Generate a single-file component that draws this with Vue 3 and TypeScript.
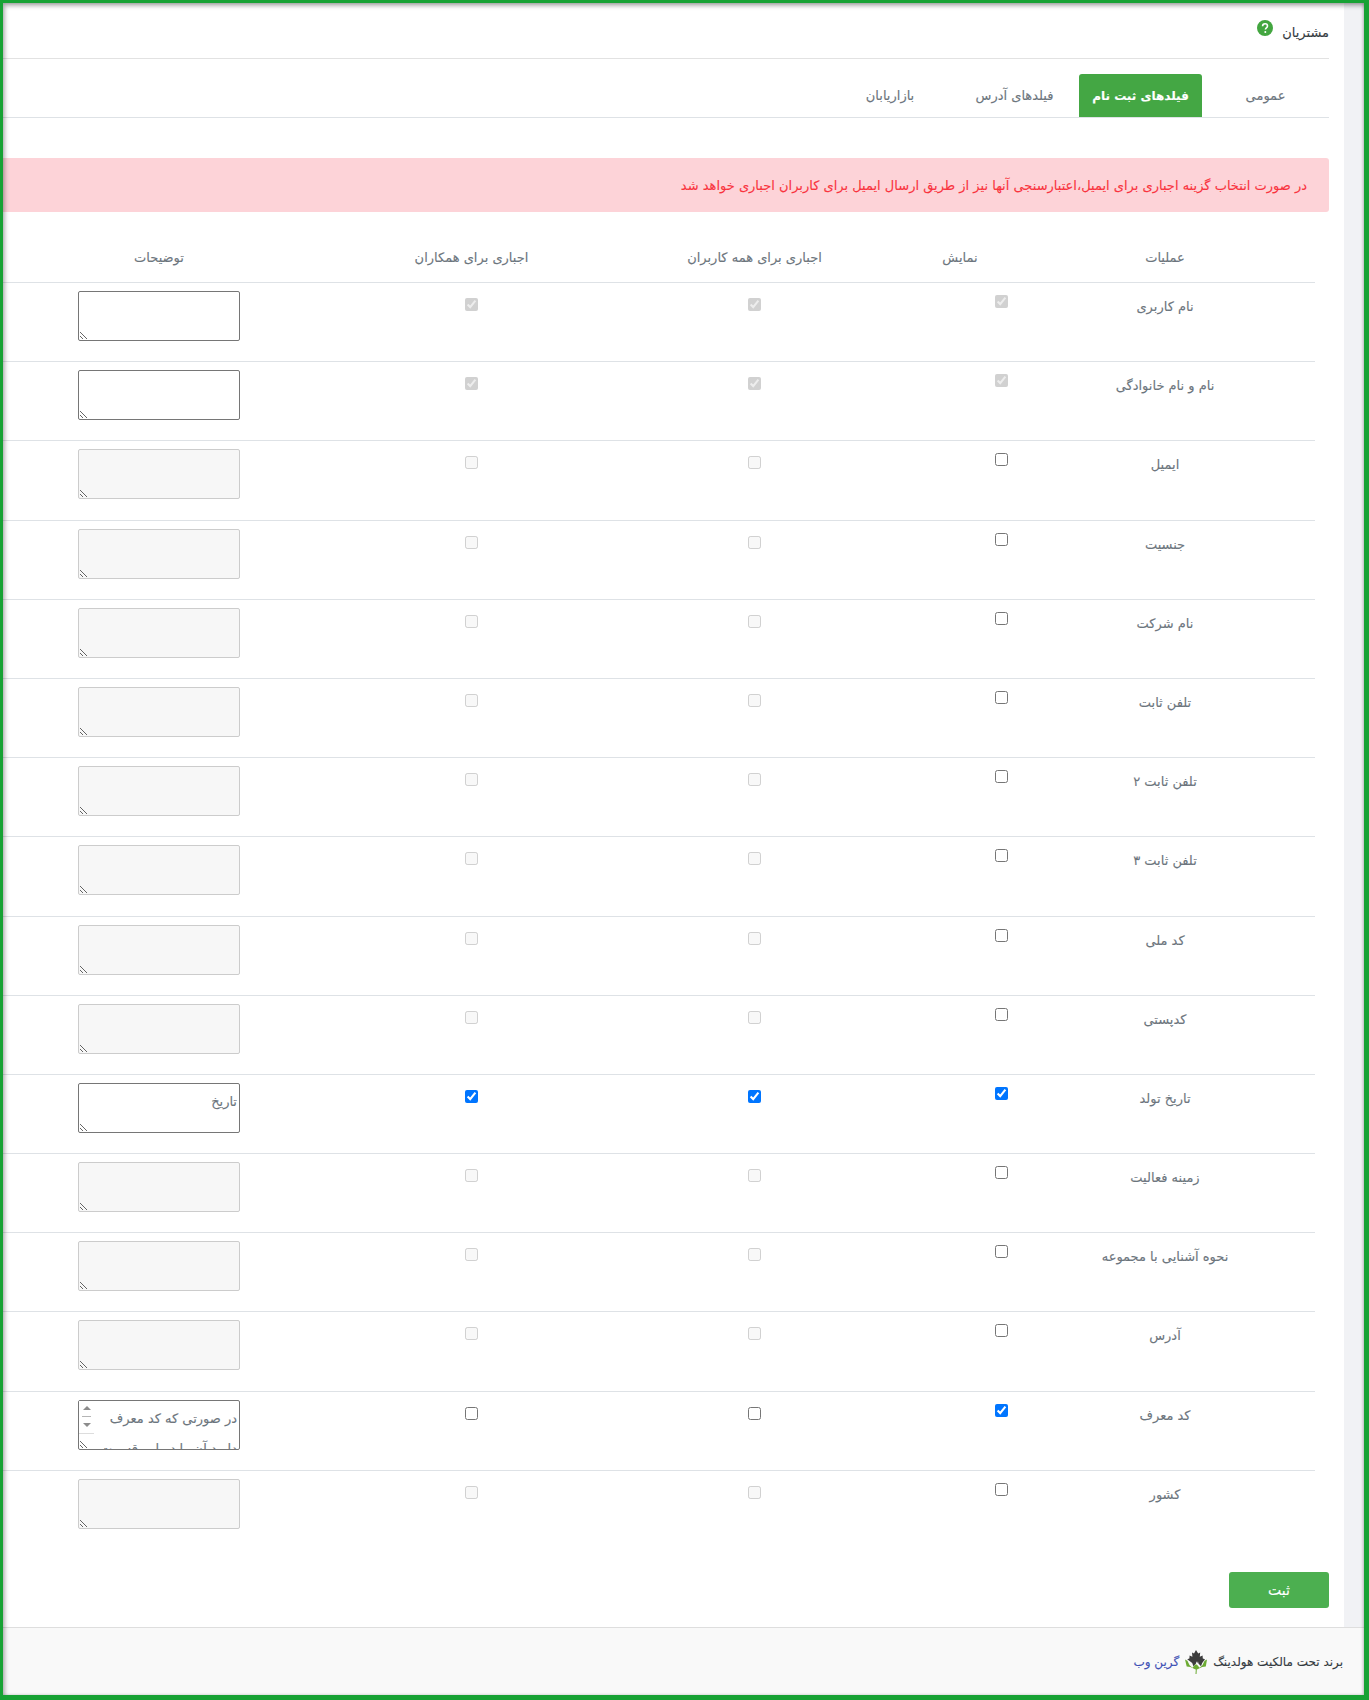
<script setup lang="ts">
interface Row {
  label: string
  show: 'locked' | 'on' | 'off'
  required: 'locked' | 'on' | 'off' | 'disabled'
  note?: string
  noteOff?: boolean
  scroll?: boolean
}

const rows: Row[] = [
  { label: 'نام کاربری', show: 'locked', required: 'locked' },
  { label: 'نام و نام خانوادگی', show: 'locked', required: 'locked' },
  { label: 'ایمیل', show: 'off', required: 'disabled', noteOff: true },
  { label: 'جنسیت', show: 'off', required: 'disabled', noteOff: true },
  { label: 'نام شرکت', show: 'off', required: 'disabled', noteOff: true },
  { label: 'تلفن ثابت', show: 'off', required: 'disabled', noteOff: true },
  { label: 'تلفن ثابت ۲', show: 'off', required: 'disabled', noteOff: true },
  { label: 'تلفن ثابت ۳', show: 'off', required: 'disabled', noteOff: true },
  { label: 'کد ملی', show: 'off', required: 'disabled', noteOff: true },
  { label: 'کدپستی', show: 'off', required: 'disabled', noteOff: true },
  { label: 'تاریخ تولد', show: 'on', required: 'on', note: 'تاریخ' },
  { label: 'زمینه فعالیت', show: 'off', required: 'disabled', noteOff: true },
  { label: 'نحوه آشنایی با مجموعه', show: 'off', required: 'disabled', noteOff: true },
  { label: 'آدرس', show: 'off', required: 'disabled', noteOff: true },
  { label: 'کد معرف', show: 'on', required: 'off', note: 'در صورتی که کد معرف دارید آن را در این قسمت وارد کنید', scroll: true },
  { label: 'کشور', show: 'off', required: 'disabled', noteOff: true },
]

const tabs = [
  { name: 'عمومی', width: 127, active: false },
  { name: 'فیلدهای ثبت نام', width: 123, active: true },
  { name: 'فیلدهای آدرس', width: 129, active: false },
  { name: 'بازاریابان', width: 120, active: false },
]
</script>

<template>
  <div class="frame" dir="rtl">
    <div class="content">
      <main class="panel">
        <header class="title">
          <span>مشتریان</span>
          <svg class="help" viewBox="0 0 16 16" width="16" height="16">
            <circle cx="8" cy="8" r="8" fill="#43a640" />
            <path d="M5.6 6.2c0-1.500 1-2.400 2.500-2.400s2.400.9 2.400 2.100c0 1.900-2.100 1.900-2.100 3.600" fill="none" stroke="#fff" stroke-width="1.600" />
            <circle cx="8.300" cy="12" r="1" fill="#fff" />
          </svg>
        </header>

        <nav class="tabs">
          <a v-for="t in tabs" :key="t.name" class="tab" :class="{ active: t.active }" :style="{ width: t.width + 'px' }">{{ t.name }}</a>
        </nav>

        <div class="alert">در صورت انتخاب گزینه اجباری برای ایمیل،اعتبارسنجی آنها نیز از طریق ارسال ایمیل برای کاربران اجباری خواهد شد</div>

        <table class="fields">
          <thead>
            <tr>
              <th class="c-label">عملیات</th>
              <th class="c-show">نمایش</th>
              <th class="c-all">اجباری برای همه کاربران</th>
              <th class="c-partner">اجباری برای همکاران</th>
              <th class="c-note">توضیحات</th>
            </tr>
          </thead>
          <tbody>
            <tr v-for="r in rows" :key="r.label">
              <td class="c-label">{{ r.label }}</td>
              <td class="c-show">
                <input class="show-box" type="checkbox" :checked="r.show !== 'off'" :disabled="r.show === 'locked'" />
              </td>
              <td class="c-all">
                <input type="checkbox" :checked="r.required === 'locked' || r.required === 'on'" :disabled="r.required === 'locked' || r.required === 'disabled'" />
              </td>
              <td class="c-partner">
                <input type="checkbox" :checked="r.required === 'locked' || r.required === 'on'" :disabled="r.required === 'locked' || r.required === 'disabled'" />
              </td>
              <td class="c-note">
                <div class="note-wrap">
                  <textarea :value="r.note ?? ''" :disabled="r.noteOff" :class="{ scrolled: r.scroll }"></textarea>
                  <div v-if="r.scroll" class="scrollbar">
                    <i class="arrow up"></i>
                    <i class="dash"></i>
                    <i class="arrow down"></i>
                  </div>
                </div>
              </td>
            </tr>
          </tbody>
        </table>

        <div class="actions">
          <button class="save" type="button">ثبت</button>
        </div>
      </main>
    </div>

    <footer class="foot">
      <span>برند تحت مالکیت هولدینگ</span>
      <svg class="logo" viewBox="0 0 22 24" width="22" height="24">
        <path d="M11 0l2.200 3.600 2-1-.4 4.200 2.800-1.400.2 3 2.200.8-2.800 3.800-1.200 3.200-2.600-2.600-.4-2.400-.8 2-.8-2-.4 2.400-2.600 2.600-1.200-3.200L2.200 9.200l2.200-.8.2-3 2.800 1.400L7 2.600l2 1z" fill="#3d3d3d" />
        <path d="M0 9.500l2.400 1.200 2.200 4.500 2.800 2.600 3-3.500.6.800.6-.8 3 3.500 2.800-2.600 2.200-4.500L22 9.500l-1.200 7-3.600.6-4.700 2.100-.7.300-.3 4.500h-1l.3-4.500-.8-.3-4.600-2.100-3.700-.6z" fill="#6cab33" />
      </svg>
      <a class="brand">گرین وب</a>
    </footer>
  </div>
</template>

<style scoped>
.frame {
  box-sizing: border-box;
  height: 1700px;
  display: flex;
  flex-direction: column;
  border: solid #17a234;
  border-width: 3px 5px 5px 3px;
  font-family: "DejaVu Sans", "Noto Sans", sans-serif;
  font-size: 13px;
  color: #6c757d;
  position: relative;
  -webkit-text-stroke: 0.12px;
}

.frame::after {
  content: "";
  position: absolute;
  inset: 0;
  pointer-events: none;
  box-shadow: inset 2px 3px 4px rgba(0, 0, 0, 0.3), inset -1px 0 3px rgba(0, 0, 0, 0.2);
}

.content {
  flex: 1;
  min-height: 0;
  background: #f1f2f5;
  padding-right: 20px;
}

.panel {
  height: 100%;
  box-sizing: border-box;
  background: #fff;
  padding-right: 15px;
}

.title {
  height: 56px;
  border-bottom: 1px solid #e2e2e2;
  box-sizing: border-box;
  display: flex;
  align-items: center;
  gap: 9px;
  color: #343a40;
  padding-top: 3px;
}

.help {
  margin-top: -8px;
}

.tabs {
  margin-top: 15px;
  height: 43px;
  border-bottom: 1px solid #dee2e6;
  display: flex;
}

.tab {
  display: flex;
  align-items: center;
  justify-content: center;
  height: 43px;
  color: #6c757d;
}

.tab.active {
  background: #44a744;
  color: #fff;
  font-size: 12px;
  font-weight: 700;
  border-radius: 3px 3px 0 0;
}

.alert {
  margin-top: 40px;
  height: 54px;
  box-sizing: border-box;
  padding: 0 22px;
  display: flex;
  align-items: center;
  background: #fdd3d8;
  border-radius: 0 3px 3px 0;
  color: #f9333e;
}

.fields {
  width: 1312px;
  margin: 20px 14px 0 0;
  table-layout: fixed;
  border-collapse: collapse;
}

.fields th {
  height: 50px;
  font-weight: 400;
  color: #6c757d;
  text-align: center;
  padding: 0;
}

.fields tbody tr {
  height: 79.2px;
}

.fields td {
  border-top: 1px solid #dee2e6;
  text-align: center;
  vertical-align: top;
  padding: 15px 0 0;
}

.fields .c-label {
  width: 252px;
  padding-right: 24px;
}

.fields td.c-label {
  padding-top: 16px;
}

.c-show {
  width: 158px;
}

.c-all {
  width: 253px;
}

.c-partner {
  width: 313px;
}

.c-note {
  width: 312px;
}

.fields td.c-show {
  padding-top: 12px;
}

.fields td.c-note {
  padding-top: 8px;
}

input[type="checkbox"] {
  margin: 0;
  display: inline-block;
}

.show-box {
  margin-right: -83px !important;
}

.note-wrap {
  position: relative;
  width: 162px;
  margin: 0 auto;
}

textarea {
  display: block;
  box-sizing: border-box;
  width: 162px;
  height: 50px;
  padding: 3px 2px 3px 3px;
  font-family: inherit;
  font-size: 13px;
  line-height: 30px;
  color: #6c757d;
  border-radius: 2px;
  -webkit-text-stroke: 0.12px;
}

textarea:disabled {
  background: #f7f7f7;
  border: 1px solid #ccc;
}

textarea.scrolled {
  padding-left: 18px;
  overflow: hidden;
}

.scrollbar {
  position: absolute;
  top: 1px;
  left: 1px;
  width: 15px;
  height: 33px;
  background: #fff;
  border-bottom: 1px solid #ddd;
  display: flex;
  flex-direction: column;
  align-items: center;
  padding-top: 5px;
  box-sizing: border-box;
}

.arrow {
  width: 0;
  height: 0;
  border-left: 4px solid transparent;
  border-right: 4px solid transparent;
}

.arrow.up {
  border-bottom: 4px solid #8c8c8c;
}

.arrow.down {
  border-top: 4px solid #8c8c8c;
}

.dash {
  width: 9px;
  border-top: 1px solid #b5b5b5;
  margin: 6px 0;
}

.actions {
  display: flex;
  margin-top: 22px;
}

.save {
  width: 100px;
  height: 36px;
  border: 0;
  border-radius: 3px;
  background: #4caf50;
  color: #fff;
  font-family: inherit;
  font-size: 14px;
}

.foot {
  box-sizing: border-box;
  height: 68px;
  background: #f9f9f9;
  border-top: 1px solid #dedede;
  display: flex;
  align-items: center;
  gap: 6px;
  padding-right: 21px;
  font-size: 12px;
  color: #343a40;
}

.brand {
  color: #3f51b5;
}
</style>
